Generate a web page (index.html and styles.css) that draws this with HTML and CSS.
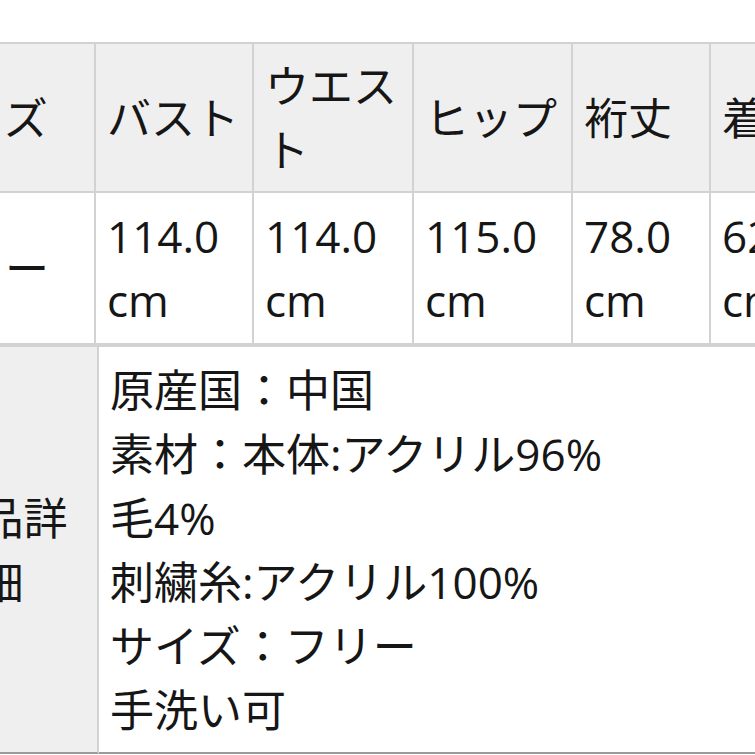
FILE: index.html
```html
<!DOCTYPE html>
<html lang="ja">
<head>
<meta charset="utf-8">
<link rel="stylesheet" href="styles.css">
</head>
<body>
<div class="page">
  <table class="size-table">
    <tr class="head-row">
      <th class="c1">サイズ</th>
      <th class="c2">バスト</th>
      <th class="c3">ウエスト</th>
      <th class="c4">ヒップ</th>
      <th class="c5">裄丈</th>
      <th class="c6">着丈</th>
    </tr>
    <tr class="data-row">
      <td>フリー</td>
      <td>114.0 cm</td>
      <td>114.0 cm</td>
      <td>115.0 cm</td>
      <td>78.0 cm</td>
      <td>62.0 cm</td>
    </tr>
  </table>
  <table class="detail-table">
    <tr>
      <th class="label">商品詳細</th>
      <td class="detail">原産国：中国<br>素材：本体:アクリル96%<br>毛4%<br>刺繍糸:アクリル100%<br>サイズ：フリー<br>手洗い可</td>
    </tr>
  </table>
</div>
</body>
</html>
```

FILE: styles.css
```css
html, body {
  margin: 0;
  padding: 0;
  overflow: hidden;
  background: #ffffff;
}

body {
  font-family: "Open Sans", "Noto Sans CJK JP", sans-serif;
  font-size: 44px;
  line-height: 64px;
  color: #161616;
}

.page {
  padding-top: 42px;
  margin-left: -96px;
  width: 1000px;
}

table {
  border-collapse: separate;
  border-spacing: 0;
  table-layout: fixed;
  border-left: 2px solid #d2d2d2;
}

th, td {
  box-sizing: border-box;
  border-right: 2px solid #d2d2d2;
  border-bottom: 2px solid #d2d2d2;
  padding: 0 11px;
  vertical-align: middle;
  text-align: left;
  font-weight: 400;
}

.size-table {
  width: 967px;
  border-top: 2px solid #d2d2d2;
}

.head-row th {
  background: #efefef;
  height: 149px;
}

.data-row td {
  height: 152px;
  background: #ffffff;
}

.c1 { width: 190px; }
.c2 { width: 158px; }
.c3 { width: 160px; }
.c4 { width: 159px; }
.c5 { width: 138px; }
.c6 { width: 160px; }

.detail-table {
  width: 967px;
  border-top: 2px solid #d2d2d2;
}

.detail-table .label {
  width: 193px;
  background: #efefef;
  text-align: center;
  border-bottom-color: #9a9a9a;
}

.detail-table .detail {
  height: 407px;
  padding: 10px 11px;
  border-bottom-color: #9a9a9a;
}
```
